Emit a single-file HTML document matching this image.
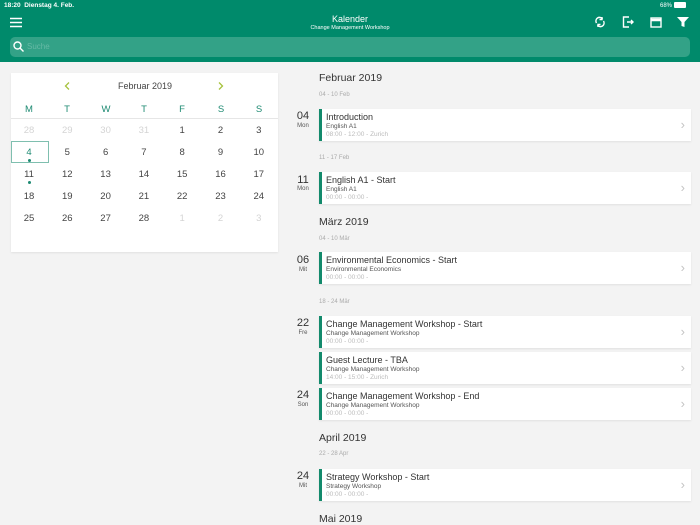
<!DOCTYPE html>
<html><head><meta charset="utf-8"><style>
*{margin:0;padding:0;box-sizing:border-box}
body{width:700px;height:525px;overflow:hidden;background:#f3f3f3;font-family:"Liberation Sans",sans-serif;position:relative;color:#333}
.a{position:absolute}
#hdr{left:0;top:0;width:700px;height:62px;background:#008a6b}
#search{left:10px;top:37px;width:680px;height:20px;background:#33a287;border-radius:5px}
.card{position:absolute;left:11px;top:73px;width:267px;height:179px;background:#fff;box-shadow:0 1px 2px rgba(0,0,0,.08)}
.d{position:absolute;width:38px;text-align:center;font-size:9.5px;color:#444}
.g{color:#d4d4d4}
.wd{position:absolute;width:38px;text-align:center;font-size:9.5px;color:#1d8a72;top:104px}
.ev{position:absolute;left:319px;width:372px;height:32px;background:#fff;border-left:3px solid #138a6c;box-shadow:0 1px 2px rgba(0,0,0,.08)}
.ev .t{position:absolute;left:4px;top:3px;font-size:9px;color:#333}
.ev .s{position:absolute;left:4px;top:14px;font-size:6.5px;color:#555}
.ev .m{position:absolute;left:4px;top:22px;font-size:6.5px;color:#bbb}
.ev .c{position:absolute;right:6px;top:8px;font-size:13px;color:#c4c4c4}
.dn{position:absolute;left:290px;width:26px;text-align:center;font-size:11px;color:#333}
.dw{position:absolute;left:290px;width:26px;text-align:center;font-size:6px;color:#555}
.mh{position:absolute;left:319px;font-size:10.5px;color:#333}
.wk{position:absolute;left:319px;font-size:6px;color:#aaa}
</style></head><body>
<div id="hdr" class="a"></div>
<div class="a" style="left:4px;top:2px;font-size:6.5px;color:#fff;font-weight:bold">18:20&nbsp; Dienstag 4. Feb.</div>
<div class="a" style="left:660px;top:2px;font-size:6px;color:#fff">68% <span style="display:inline-block;width:12px;height:6px;background:#fff;border-radius:1px;vertical-align:-1px"></span></div>
<svg class="a" style="left:10px;top:17px" width="13" height="11"><path d="M0 1.5H12M0 5.5H12M0 9.5H12" stroke="#fff" stroke-width="1.6"/></svg>
<div class="a" style="left:250px;top:14px;width:200px;text-align:center;color:#fff;font-size:9px">Kalender</div>
<div class="a" style="left:250px;top:25px;width:200px;text-align:center;color:#fff;font-size:5.5px">Change Management Workshop</div>
<svg class="a" style="left:594px;top:16px" width="12" height="12" fill="none" stroke="#fff" stroke-width="1.4"><path d="M2.5 7A3.5 3.5 0 0 1 8.5 3M9.5 5A3.5 3.5 0 0 1 3.5 9"/><path d="M8 1v2.5h-2.5M4 11V8.5h2.5"/></svg>
<svg class="a" style="left:622px;top:16px" width="12" height="12" fill="none" stroke="#fff" stroke-width="1.4"><path d="M7 1H1.5v10H7M5 6h6M9 4l2 2-2 2"/></svg>
<svg class="a" style="left:650px;top:16px" width="12" height="12" fill="none" stroke="#fff" stroke-width="1.4"><rect x="1" y="2" width="10" height="9"/><path d="M1 4h10" stroke-width="2.5"/></svg>
<svg class="a" style="left:677px;top:16px" width="12" height="12"><path d="M0 1h12L7.5 6v5l-3-1V6z" fill="#fff"/></svg>
<div id="search" class="a"></div>
<svg class="a" style="left:13px;top:41px" width="11" height="11" fill="none" stroke="#fff" stroke-width="1.4"><circle cx="4.5" cy="4.5" r="3.5"/><path d="M7 7l3.5 3.5"/></svg>
<div class="a" style="left:27px;top:42px;font-size:8px;color:#66b9a5">Suche</div>

<div class="card"></div>
<svg class="a" style="left:64px;top:82px" width="6" height="8" fill="none" stroke="#a7c23e" stroke-width="1.3"><path d="M5 0.5L1.5 4 5 7.5"/></svg>
<svg class="a" style="left:218px;top:82px" width="6" height="8" fill="none" stroke="#a7c23e" stroke-width="1.3"><path d="M1 0.5L4.5 4 1 7.5"/></svg>
<div class="a" style="left:95px;top:81px;width:100px;text-align:center;font-size:9px;color:#444">Februar 2019</div>
<div class="wd" style="left:10px">M</div><div class="wd" style="left:48px">T</div><div class="wd" style="left:87px">W</div><div class="wd" style="left:125px">T</div><div class="wd" style="left:163px">F</div><div class="wd" style="left:202px">S</div><div class="wd" style="left:240px">S</div>
<div class="a" style="left:11px;top:118px;width:267px;height:1px;background:#e6e6e6"></div>
<div class="a" style="left:11px;top:141px;width:38px;height:22px;border:1px solid #7fbfaf"></div>
<div class="a" style="left:28px;top:159px;width:3px;height:3px;border-radius:50%;background:#1d8a72"></div>
<div class="a" style="left:28px;top:181px;width:3px;height:3px;border-radius:50%;background:#1d8a72"></div>
<div id="days"></div>
<script>
var rows=[["28g","29g","30g","31g","1","2","3"],["4a","5","6","7","8","9","10"],["11","12","13","14","15","16","17"],["18","19","20","21","22","23","24"],["25","26","27","28","1g","2g","3g"]];
var h="";rows.forEach(function(r,i){r.forEach(function(v,j){var c="d";if(v.slice(-1)=="g"){c+=" g";v=v.slice(0,-1)}var st="";if(v.slice(-1)=="a"){v=v.slice(0,-1);st="color:#1d8a72;"}h+='<div class="'+c+'" style="'+st+'left:'+(10+j*38.3)+'px;top:'+(125+i*22)+'px">'+v+'</div>'})});document.getElementById("days").innerHTML=h;
</script>

<div class="mh" style="top:72px">Februar 2019</div>
<div class="wk" style="top:92px">04 - 10 Feb</div>
<div class="dn" style="top:110px">04</div><div class="dw" style="top:123px">Mon</div>
<div class="ev" style="top:109px"><div class="t">Introduction</div><div class="s">English A1</div><div class="m">08:00 - 12:00 - Zurich</div><div class="c">&#8250;</div></div>
<div class="wk" style="top:155px">11 - 17 Feb</div>
<div class="dn" style="top:174px">11</div><div class="dw" style="top:186px">Mon</div>
<div class="ev" style="top:172px"><div class="t">English A1 - Start</div><div class="s">English A1</div><div class="m">00:00 - 00:00 -</div><div class="c">&#8250;</div></div>
<div class="mh" style="top:216px">März 2019</div>
<div class="wk" style="top:236px">04 - 10 Mär</div>
<div class="dn" style="top:254px">06</div><div class="dw" style="top:267px">Mit</div>
<div class="ev" style="top:252px"><div class="t">Environmental Economics - Start</div><div class="s">Environmental Economics</div><div class="m">00:00 - 00:00 -</div><div class="c">&#8250;</div></div>
<div class="wk" style="top:299px">18 - 24 Mär</div>
<div class="dn" style="top:317px">22</div><div class="dw" style="top:330px">Fre</div>
<div class="ev" style="top:316px"><div class="t">Change Management Workshop - Start</div><div class="s">Change Management Workshop</div><div class="m">00:00 - 00:00 -</div><div class="c">&#8250;</div></div>
<div class="ev" style="top:352px"><div class="t">Guest Lecture - TBA</div><div class="s">Change Management Workshop</div><div class="m">14:00 - 15:00 - Zurich</div><div class="c">&#8250;</div></div>
<div class="dn" style="top:389px">24</div><div class="dw" style="top:402px">Son</div>
<div class="ev" style="top:388px"><div class="t">Change Management Workshop - End</div><div class="s">Change Management Workshop</div><div class="m">00:00 - 00:00 -</div><div class="c">&#8250;</div></div>
<div class="mh" style="top:432px">April 2019</div>
<div class="wk" style="top:451px">22 - 28 Apr</div>
<div class="dn" style="top:470px">24</div><div class="dw" style="top:483px">Mit</div>
<div class="ev" style="top:469px"><div class="t">Strategy Workshop - Start</div><div class="s">Strategy Workshop</div><div class="m">00:00 - 00:00 -</div><div class="c">&#8250;</div></div>
<div class="mh" style="top:513px">Mai 2019</div>
</body></html>
